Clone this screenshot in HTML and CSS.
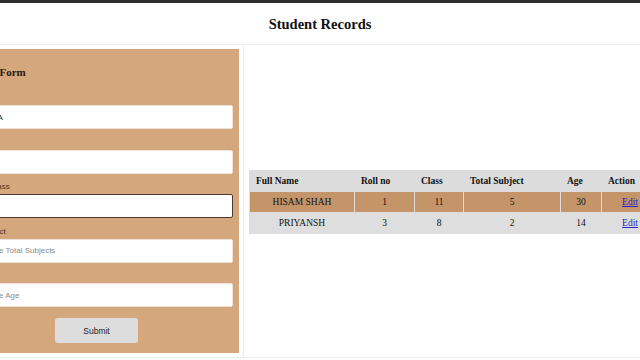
FILE: index.html
```html
<!DOCTYPE html>
<html>
<head>
  <title>Student Records</title>
  <link rel="stylesheet" href="styles.css">
</head>
<body>
  <h1 class="title">Student Records</h1>
  <div class="main">
    <div class="left">
      <form class="student-form">
        <h2>Student Form</h2>
        <div class="field">
          <label>Name</label>
          <input type="text" value="AYESHA">
        </div>
        <div class="field">
          <label>Roll no</label>
          <input type="text">
        </div>
        <div class="field">
          <label>Student Class</label>
          <input type="text" class="focused">
        </div>
        <div class="field">
          <label>Total Subject</label>
          <input type="text" placeholder="Enter the Total Subjects">
        </div>
        <div class="field">
          <label>Age</label>
          <input type="text" placeholder="Enter the Age">
        </div>
        <div class="actions">
          <button type="button" class="submit">Submit</button>
        </div>
      </form>
    </div>
    <div class="right">
      <table class="records">
        <colgroup>
          <col class="c-name">
          <col class="c-roll">
          <col class="c-class">
          <col class="c-subj">
          <col class="c-age">
          <col class="c-act">
        </colgroup>
        <tr>
          <th>Full Name</th>
          <th>Roll no</th>
          <th>Class</th>
          <th>Total Subject</th>
          <th>Age</th>
          <th>Action</th>
        </tr>
        <tr class="active">
          <td>HISAM SHAH</td>
          <td>1</td>
          <td>11</td>
          <td>5</td>
          <td>30</td>
          <td><a href="#">Edit</a></td>
        </tr>
        <tr>
          <td>PRIYANSH</td>
          <td>3</td>
          <td>8</td>
          <td>2</td>
          <td>14</td>
          <td><a href="#">Edit</a></td>
        </tr>
      </table>
    </div>
  </div>
</body>
</html>
```

FILE: styles.css
```css
body {
  margin: 0;
  border-top: 3px solid #2e2e2e;
  background-color: #ffffff;
  font-family: "Liberation Serif", "Times New Roman", serif;
  color: #111111;
  overflow: hidden;
  height: 357px;
}

.title {
  margin: 0;
  height: 41px;
  line-height: 42px;
  font-size: 14.5px;
  text-align: center;
}

.main {
  display: flex;
  height: 312px;
  border-top: 1px solid #eeeeee;
  border-bottom: 1px solid #eeeeee;
}

.left {
  width: 239px;
  padding: 4px 4px 4px 0;
  flex-shrink: 0;
}

.student-form {
  margin-left: -46px;
  height: 100%;
  box-sizing: border-box;
  padding: 6px 6px 10px 6px;
  background-color: #d4a77c;
}

.student-form h2 {
  margin: 10px 0 15px 0;
  font-size: 11px;
  line-height: 14px;
  color: #2a1a0c;
}

.field {
  margin-bottom: 9.5px;
}

.field label {
  display: block;
  height: 10px;
  margin-bottom: 1px;
  font-family: "Liberation Sans", Arial, sans-serif;
  font-size: 8px;
  line-height: 8px;
  color: #4a3522;
}

.field input {
  display: block;
  width: 100%;
  height: 24px;
  box-sizing: border-box;
  padding: 0 10px;
  border: 1px solid #ede3d8;
  border-radius: 2px;
  background-color: #ffffff;
  font-family: "Liberation Sans", Arial, sans-serif;
  font-size: 8px;
  color: #222222;
  outline: none;
}

.field input::placeholder {
  color: #8a8a8a;
}

.field input.focused {
  border: 1px solid #4b3a2c;
}

.actions {
  text-align: center;
  padding-top: 1.5px;
}

.submit {
  width: 83px;
  height: 25px;
  border: none;
  border-radius: 3px;
  background-color: #dddddd;
  font-family: "Liberation Sans", Arial, sans-serif;
  font-size: 8.5px;
  color: #222222;
}

.right {
  flex: 1;
  display: flex;
  align-items: center;
  padding-left: 5px;
  border-left: 1px solid #eaeaea;
  overflow: hidden;
}

.records {
  width: 409px;
  flex-shrink: 0;
  margin-top: 2px;
  table-layout: fixed;
  border-collapse: collapse;
  font-size: 9.5px;
}

.records th,
.records td {
  border: 1px solid #dddddd;
  padding: 0 6px;
  white-space: nowrap;
}

.records th {
  height: 20px;
  text-align: left;
  background-color: #dcdcdc;
}

.records td {
  height: 20px;
  text-align: center;
  background-color: #dedede;
}

.records tr.active td {
  background-color: #c5956a;
}

.records a {
  color: #2323c8;
}

.c-name { width: 105px; }
.c-roll { width: 60px; }
.c-class { width: 49px; }
.c-subj { width: 97px; }
.c-age { width: 41px; }
.c-act { width: 57px; }
```
